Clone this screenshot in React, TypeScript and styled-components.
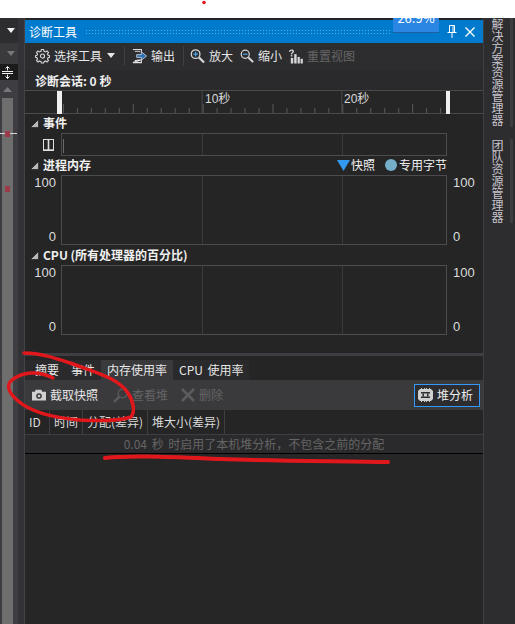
import React from "react";
import styled, { createGlobalStyle } from "styled-components";

const GlobalStyle = createGlobalStyle`
  html, body {
    margin: 0;
    padding: 0;
    background: #fff;
  }
  * {
    box-sizing: border-box;
  }
`;

const Page = styled.div`
  position: relative;
  width: 515px;
  height: 624px;
  overflow: hidden;
  display: flex;
  flex-direction: column;
  font-family: "Noto Sans CJK SC", "Liberation Sans", sans-serif;
  font-size: 12px;
  line-height: 16px;
  color: #e6e6e6;
`;

const TopGap = styled.div`
  height: 18px;
  flex: none;
  background: #fff;
  border-bottom: 1px solid #fff;
`;

const Workspace = styled.div`
  flex: 1;
  display: flex;
  min-height: 0;
  background: #2d2d30;
`;

/* left editor scrollbar */
const Rail = styled.div`
  position: relative;
  width: 25px;
  flex: none;
  display: flex;
  background: #333337;
  border-right: 1px solid #434346;
`;

const RailColumn = styled.div`
  width: 18px;
  display: flex;
  flex-direction: column;
  background: #3e3e42;
`;

const RailHead = styled.div<{ $h: number; $bg: string; $left?: number; $right?: number }>`
  height: ${(p) => p.$h}px;
  flex: none;
  display: flex;
  align-items: center;
  justify-content: center;
  background: ${(p) => p.$bg};
  padding-left: ${(p) => p.$left ?? 0}px;
  padding-right: ${(p) => p.$right ?? 0}px;
`;

const Thumb = styled.div`
  flex: 1;
  margin-left: 2px;
  margin-right: 5px;
  background: #6e6e6e;
`;

const RailLine = styled.div`
  position: absolute;
  left: 0;
  top: 115px;
  width: 17px;
  height: 1px;
  background: #d8d8d8;
`;

const RailMark = styled.div<{ $top: number }>`
  position: absolute;
  left: 5px;
  top: ${(p) => p.$top}px;
  width: 5px;
  height: 6px;
  background: #9b3a48;
`;

const Panel = styled.div`
  position: relative;
  width: 459px;
  flex: none;
  display: flex;
  flex-direction: column;
  background: #252526;
  overflow: hidden;
  padding-top: 2px;
  border-right: 1px solid #3f3f42;
`;

const TitleBar = styled.div`
  height: 23px;
  flex: none;
  display: flex;
  align-items: center;
  padding: 0 4px 0 4px;
  background: #007acc;
  color: #fff;
`;

const Grip = styled.div`
  flex: 1;
  height: 5px;
  margin: 0 52px 0 8px;
  background-image: radial-gradient(#5aaee0 0.7px, transparent 0.8px);
  background-size: 3px 3px;
`;

const TitleIcon = styled.div`
  width: 18px;
  height: 18px;
  display: flex;
  align-items: center;
  justify-content: center;
`;

const Badge = styled.div`
  position: absolute;
  left: 368px;
  top: -8px;
  width: 46px;
  height: 22px;
  background: #2b86e3;
  color: #fff;
  font-size: 13px;
  line-height: 16px;
  text-align: center;
  box-shadow: 0 1px 0 #1e5f9e;
`;

const Toolbar = styled.div`
  height: 27px;
  flex: none;
  display: flex;
  align-items: center;
  padding: 0 0 2px 10px;
  background: #2d2d30;
`;

const ToolItem = styled.div<{ $dim?: boolean; $gap?: number }>`
  display: flex;
  align-items: center;
  gap: 4px;
  margin-right: ${(p) => p.$gap ?? 0}px;
  color: ${(p) => (p.$dim ? "#656565" : "#e6e6e6")};
  white-space: nowrap;
`;

const ToolSep = styled.div<{ $before?: number; $after: number }>`
  width: 1px;
  height: 20px;
  background: #3f3f42;
  margin-left: ${(p) => p.$before ?? 0}px;
  margin-right: ${(p) => p.$after}px;
`;

const SessionRow = styled.div`
  height: 20px;
  flex: none;
  padding-left: 10px;
  background: #2a2a2c;
  font-weight: 700;
  line-height: 21px;
  color: #f0f0f0;
`;

const Ruler = styled.div`
  position: relative;
  height: 24px;
  flex: none;
  background: #262627;
  border-top: 1px solid #4a4a4c;
  border-bottom: 1px solid #4a4a4c;
`;

const RulerLabel = styled.span<{ $left: number }>`
  position: absolute;
  left: ${(p) => p.$left}px;
  top: 0;
  font-family: "Liberation Sans", "Noto Sans CJK SC", sans-serif;
  font-size: 12px;
  line-height: 16px;
  color: #d8d8d8;
`;

const RulerThumb = styled.div<{ $left: number; $w: number }>`
  position: absolute;
  left: ${(p) => p.$left}px;
  top: 0;
  width: ${(p) => p.$w}px;
  height: 23px;
  background: #f0f0f0;
`;

const RulerTicks = styled.svg`
  display: block;
  width: 100%;
  height: 22px;
`;

const SectionHead = styled.div<{ $top: number }>`
  height: 16px;
  flex: none;
  margin-top: ${(p) => p.$top}px;
  display: flex;
  align-items: center;
  gap: 4px;
  padding-left: 5px;
  font-weight: 700;
  color: #f0f0f0;
`;

const LegendRow = styled(SectionHead)`
  justify-content: space-between;
  padding-right: 36px;
`;

const HeadLeft = styled.div`
  display: flex;
  align-items: center;
  gap: 4px;
`;

const Legend = styled.div`
  display: flex;
  align-items: center;
  font-weight: 400;
`;

const LegendItem = styled.div<{ $gap?: number }>`
  display: flex;
  align-items: center;
  gap: 1px;
  margin-left: ${(p) => p.$gap ?? 0}px;
`;

const Dot = styled.span`
  display: block;
  width: 12px;
  height: 12px;
  border-radius: 50%;
  background: #75aec8;
  margin-right: 1px;
`;

const ChartRow = styled.div<{ $top: number; $h: number }>`
  height: ${(p) => p.$h}px;
  flex: none;
  margin-top: ${(p) => p.$top}px;
  display: grid;
  grid-template-columns: 36px 386px 1fr;
`;

const Axis = styled.div<{ $right?: boolean }>`
  display: flex;
  flex-direction: column;
  justify-content: space-between;
  align-items: ${(p) => (p.$right ? "flex-start" : "flex-end")};
  padding: 0 ${(p) => (p.$right ? 0 : 5)}px 0 ${(p) => (p.$right ? 6 : 0)}px;
  font-family: "Liberation Sans", sans-serif;
  font-size: 13px;
  color: #dcdcdc;
`;

const Plot = styled.div`
  display: grid;
  grid-template-columns: 141px 140px 1fr;
  border: 1px solid #4c4c4e;
`;

const PlotCell = styled.div`
  position: relative;
  border-right: 1px solid #3a3a3c;
  &:last-child {
    border-right: 0;
  }
`;

const TrackMark = styled.div`
  position: absolute;
  left: 1px;
  top: 5px;
  width: 1px;
  height: 14px;
  background: #6a6a6a;
`;

const PauseCell = styled.div`
  display: flex;
  align-items: center;
  justify-content: flex-end;
  padding-right: 7px;
`;

const Splitter = styled.div`
  height: 3px;
  flex: none;
  margin-top: 18px;
  background: #3e3e42;
`;

const Tabs = styled.div`
  height: 20px;
  flex: none;
  margin-top: 4px;
  display: flex;
  width: 224px;
  background: #2a2a2c;
`;

const Tab = styled.div<{ $active?: boolean; $w: number; $pad: number }>`
  width: ${(p) => p.$w}px;
  flex: none;
  padding-left: ${(p) => p.$pad}px;
  line-height: 20px;
  word-spacing: 2px;
  white-space: nowrap;
  background: ${(p) => (p.$active ? "#3a3a3d" : "transparent")};
  color: #e6e6e6;
`;

const CaptureBar = styled.div`
  height: 30px;
  flex: none;
  display: flex;
  align-items: center;
  padding: 0 3px 0 7px;
  background: #3a3a3d;
`;

const HeapButton = styled.div`
  margin-left: auto;
  width: 66px;
  height: 23px;
  display: flex;
  align-items: center;
  gap: 4px;
  padding-left: 3px;
  background: #2d2d30;
  border: 1px solid #3399ff;
  color: #f0f0f0;
`;

const HeaderRow = styled.div`
  height: 25px;
  flex: none;
  display: flex;
  background: #252526;
  border-bottom: 1px solid #3e3e42;
`;

const HeaderCell = styled.div<{ $w: number }>`
  width: ${(p) => p.$w}px;
  flex: none;
  padding-left: 4px;
  line-height: 24px;
  white-space: nowrap;
  border-right: 1px solid #3e3e42;
  color: #dcdcdc;
`;

const InfoRow = styled.div`
  height: 19px;
  flex: none;
  text-align: center;
  line-height: 17px;
  word-spacing: 2px;
  color: #656565;
  white-space: nowrap;
  background: #2a2a2c;
  border-bottom: 1px solid #000;
`;

const Rest = styled.div`
  flex: 1;
  background: #262626;
`;

const SideBar = styled.div`
  flex: 1;
  display: flex;
  flex-direction: column;
  gap: 12px;
  background: #2d2d30;
`;

const SideTab = styled.div<{ $h: number }>`
  height: ${(p) => p.$h}px;
  flex: none;
  display: flex;
  justify-content: space-between;
  padding: 0 2px 0 6px;
`;

const SideLabel = styled.div`
  writing-mode: vertical-rl;
  font-size: 12px;
  line-height: 14px;
  letter-spacing: 0;
  color: #c8c4cc;
  white-space: nowrap;
`;

const SideStripe = styled.div`
  width: 3px;
  background: #3e3e42;
`;

const Scribble = styled.svg`
  position: absolute;
  left: 0;
  top: 0;
  width: 515px;
  height: 624px;
  pointer-events: none;
`;

/* small drawn icons */
const Collapse = () => (
  <svg width="9" height="9" viewBox="0 0 9 9">
    <path d="M8.5 0.5V8.5H0.5Z" fill="#b8b8b8" stroke="#111" strokeWidth="0.6" />
  </svg>
);

const Caret = ({ color = "#e6e6e6", up = false, w = 8 }: { color?: string; up?: boolean; w?: number }) => (
  <svg width={w} height="5" viewBox="0 0 8 5" preserveAspectRatio="none">
    <path d={up ? "M0 5L4 0L8 5Z" : "M0 0H8L4 5Z"} fill={color} />
  </svg>
);

const SplitIcon = () => (
  <svg width="11" height="13" viewBox="0 0 11 13" fill="none" stroke="#f0f0f0">
    <path d="M0 5.5H11M0 7.5H11M5.5 0.5V4.5M5.5 8.5V12.5M3.5 2.5L5.5 0.5L7.5 2.5M3.5 10.5L5.5 12.5L7.5 10.5" />
  </svg>
);

const Gear = () => (
  <svg width="15" height="16" viewBox="0 0 16 16" fill="none" stroke="#d6d6d6" strokeWidth="1.2">
    <circle cx="8" cy="8" r="2.2" />
    <path d="M6.8 1H9.2L9.6 3L11.2 3.7L12.9 2.6L14.4 4.2L13.3 5.8L14 7.2L15.5 7.6V9.4L14 9.8L13.3 11.2L14.4 12.8L12.8 14.4L11.2 13.3L9.6 14L9.2 15.5H6.8L6.4 14L4.8 13.3L3.2 14.4L1.6 12.8L2.7 11.2L2 9.8L0.5 9.4V7.6L2 7.2L2.7 5.8L1.6 4.2L3.1 2.6L4.8 3.7L6.4 3Z" />
  </svg>
);

const ExportIcon = () => (
  <svg width="15" height="16" viewBox="0 0 16 16" fill="none">
    <path d="M1 1H10V4M10 12V15H1Z" stroke="#e0e0e0" strokeWidth="1.2" />
    <path d="M3 3H8V4M8 12V13H3Z" stroke="#e0e0e0" strokeWidth="1" />
    <path d="M5 6.5H10V3.5L15.5 8L10 12.5V9.5H5Z" fill="#2b6fb3" stroke="#e0e0e0" strokeWidth="0.8" />
  </svg>
);

const Magnifier = ({ mark, size }: { mark: "plus" | "minus"; size: number }) => (
  <svg width={size} height="16" viewBox="0 0 16 16" fill="none">
    <circle cx="6" cy="6" r="4.6" stroke="#d6d6d6" strokeWidth="1.4" />
    <path d="M9.6 9.6L15 15" stroke="#d6d6d6" strokeWidth="2.4" />
    <path d={mark === "plus" ? "M3.5 6H8.5M6 3.5V8.5" : "M3.5 6H8.5"} stroke="#4aa0e6" strokeWidth="1.4" />
  </svg>
);

const ResetIcon = () => (
  <svg width="15" height="16" viewBox="0 0 16 16" fill="#d6d6d6">
    <path d="M1 3.5C1 1 6 0 6.5 3C6.7 4.6 4.6 4.8 4.4 6.5H3C3 4.6 4.9 4 4.9 3C4.9 2 2.6 2 2.5 3.5Z" />
    <rect x="3" y="7" width="1.6" height="1.5" />
    <rect x="3" y="10" width="2.6" height="6" />
    <rect x="6.6" y="6" width="2.6" height="10" />
    <rect x="10.2" y="9" width="2.4" height="7" />
    <rect x="13.4" y="11" width="2.4" height="5" />
  </svg>
);

const Pin = () => (
  <svg width="10" height="13" viewBox="0 0 10 13" fill="none" stroke="#fff">
    <path d="M2.5 0.5H7.5V7.5H2.5ZM6 0.5V7.5M0.5 7.5H9.5M5 8V13" />
  </svg>
);

const CloseIcon = () => (
  <svg width="10" height="10" viewBox="0 0 10 10">
    <path d="M0.5 0.5L9.5 9.5M9.5 0.5L0.5 9.5" stroke="#fff" strokeWidth="1.4" />
  </svg>
);

const Pause = () => (
  <svg width="11" height="12" viewBox="0 0 11 12" fill="none" stroke="#e0e0e0">
    <rect x="0.5" y="0.5" width="10" height="11" />
    <path d="M5.5 0.5V11.5" strokeWidth="1.6" />
    <path d="M1 11H10" strokeWidth="1.4" />
  </svg>
);

const SnapshotMark = () => (
  <svg width="13" height="11" viewBox="0 0 13 11">
    <path d="M0 0H13L6.5 11Z" fill="#3399ee" />
  </svg>
);

const Camera = () => (
  <svg width="14" height="12" viewBox="0 0 15 12">
    <path d="M0 2.5H3L4 0.5H10L11 2.5H15V12H0Z" fill="#d0d0d0" />
    <circle cx="7.5" cy="7" r="3" fill="#3a3a3d" />
    <circle cx="7.5" cy="7" r="1.4" fill="#d0d0d0" />
  </svg>
);

const SearchDim = () => (
  <svg width="15" height="15" viewBox="0 0 15 15" fill="none" stroke="#5c5c5e">
    <circle cx="9.5" cy="5.5" r="4.4" strokeWidth="1.4" />
    <path d="M6.2 8.8L1 14" strokeWidth="2.4" />
  </svg>
);

const CrossDim = () => (
  <svg width="14" height="14" viewBox="0 0 14 14">
    <path d="M1 1L13 13M13 1L1 13" stroke="#5c5c5e" strokeWidth="2.6" />
  </svg>
);

const Chip = () => (
  <svg width="15" height="14" viewBox="0 0 15 14">
    <path d="M2 1H3V0H4V1H6V0H7V1H8V0H9V1H11V0H12V1H13L15 3V11L13 13H12V14H11V13H9V14H8V13H7V14H6V13H4V14H3V13H2L0 11V3Z" fill="#cfcfcf" />
    <rect x="3" y="4" width="9" height="1.5" fill="#2d2d30" />
    <rect x="3" y="8.5" width="9" height="1.5" fill="#2d2d30" />
    <rect x="4.5" y="5.5" width="1.5" height="3" fill="#2d2d30" />
    <rect x="9" y="5.5" width="1.5" height="3" fill="#2d2d30" />
  </svg>
);

// tick positions of the timeline, every 14px with a taller one each 5th
const ticks = Array.from({ length: 28 }, (_, i) => i);

const App = () => {
  return (
    <>
      <GlobalStyle />
      <Page>
        <TopGap />
        <Workspace>
          <Rail>
            <RailColumn>
              <RailHead $h={25} $bg="#2d2d30" $left={4}>
                <Caret color="#f0f0f0" />
              </RailHead>
              <RailHead $h={21} $bg="#3a3a3d" $left={4}>
                <Caret color="#77777a" />
              </RailHead>
              <RailHead $h={16} $bg="#1b1b1c" $right={3}>
                <SplitIcon />
              </RailHead>
              <RailHead $h={18} $bg="#3e3e42" $right={3}>
                <Caret color="#77777a" up w={9} />
              </RailHead>
              <Thumb />
            </RailColumn>
            <RailLine />
            <RailMark $top={113} />
            <RailMark $top={168} />
          </Rail>

          <Panel>
            <TitleBar>
              诊断工具
              <Grip />
              <TitleIcon>
                <Pin />
              </TitleIcon>
              <TitleIcon>
                <CloseIcon />
              </TitleIcon>
            </TitleBar>
            <Badge>26.9%</Badge>

            <Toolbar>
              <ToolItem $gap={5}>
                <Gear />
                选择工具
              </ToolItem>
              <Caret />
              <ToolSep $before={9} $after={7} />
              <ToolItem $gap={8}>
                <ExportIcon />
                输出
              </ToolItem>
              <ToolSep $after={6} />
              <ToolItem $gap={7}>
                <Magnifier mark="plus" size={15} />
                放大
              </ToolItem>
              <ToolItem $gap={6}>
                <Magnifier mark="minus" size={14} />
                缩小
              </ToolItem>
              <ToolItem $dim>
                <ResetIcon />
                重置视图
              </ToolItem>
            </Toolbar>

            <SessionRow>诊断会话: 0 秒</SessionRow>

            <Ruler>
              <RulerTicks viewBox="0 0 459 22">
                {ticks.map((i) => {
                  const x = 38 + i * 14;
                  const tall = i % 5 === 0;
                  return <line key={i} x1={x + 0.5} x2={x + 0.5} y1={tall ? 13 : 17} y2={22} stroke={"#5a5a5c"} />;
                })}
                <line x1={177.5} x2={177.5} y1={0} y2={22} stroke="#4a4a4c" />
                <line x1={317.5} x2={317.5} y1={0} y2={22} stroke="#4a4a4c" />
              </RulerTicks>
              <RulerLabel $left={180}>10秒</RulerLabel>
              <RulerLabel $left={319}>20秒</RulerLabel>
              <RulerThumb $left={32} $w={5} />
              <RulerThumb $left={421} $w={4} />
            </Ruler>

            <SectionHead $top={1}>
              <Collapse />
              事件
            </SectionHead>
            <ChartRow $top={2} $h={23}>
              <PauseCell>
                <Pause />
              </PauseCell>
              <Plot>
                <PlotCell>
                  <TrackMark />
                </PlotCell>
                <PlotCell />
                <PlotCell />
              </Plot>
            </ChartRow>

            <LegendRow $top={1}>
              <HeadLeft>
                <Collapse />
                进程内存
              </HeadLeft>
              <Legend>
                <LegendItem>
                  <SnapshotMark />
                  快照
                </LegendItem>
                <LegendItem $gap={10}>
                  <Dot />
                  专用字节
                </LegendItem>
              </Legend>
            </LegendRow>
            <ChartRow $top={2} $h={70}>
              <Axis>
                <span>100</span>
                <span>0</span>
              </Axis>
              <Plot>
                <PlotCell />
                <PlotCell />
                <PlotCell />
              </Plot>
              <Axis $right>
                <span>100</span>
                <span>0</span>
              </Axis>
            </ChartRow>

            <SectionHead $top={2}>
              <Collapse />
              CPU (所有处理器的百分比)
            </SectionHead>
            <ChartRow $top={2} $h={70}>
              <Axis>
                <span>100</span>
                <span>0</span>
              </Axis>
              <Plot>
                <PlotCell />
                <PlotCell />
                <PlotCell />
              </Plot>
              <Axis $right>
                <span>100</span>
                <span>0</span>
              </Axis>
            </ChartRow>

            <Splitter />
            <Tabs>
              <Tab $w={44} $pad={10}>摘要</Tab>
              <Tab $w={32} $pad={2}>事件</Tab>
              <Tab $w={72} $pad={6} $active>
                内存使用率
              </Tab>
              <Tab $w={76} $pad={6}>CPU 使用率</Tab>
            </Tabs>

            <CaptureBar>
              <ToolItem $gap={15}>
                <Camera />
                截取快照
              </ToolItem>
              <ToolItem $dim $gap={13}>
                <SearchDim />
                查看堆
              </ToolItem>
              <ToolItem $dim>
                <CrossDim />
                删除
              </ToolItem>
              <HeapButton>
                <Chip />
                堆分析
              </HeapButton>
            </CaptureBar>

            <HeaderRow>
              <HeaderCell $w={25}>ID</HeaderCell>
              <HeaderCell $w={33}>时间</HeaderCell>
              <HeaderCell $w={65}>分配(差异)</HeaderCell>
              <HeaderCell $w={77}>堆大小(差异)</HeaderCell>
            </HeaderRow>
            <InfoRow>0.04 秒 时启用了本机堆分析，不包含之前的分配</InfoRow>
            <Rest />
          </Panel>

          <SideBar>
            <SideTab $h={109}>
              <SideLabel>解决方案资源管理器</SideLabel>
              <SideStripe />
            </SideTab>
            <SideTab $h={84}>
              <SideLabel>团队资源管理器</SideLabel>
              <SideStripe />
            </SideTab>
          </SideBar>
        </Workspace>

        <Scribble viewBox="0 0 515 624" fill="none" stroke="#e0181c" strokeLinecap="round" strokeLinejoin="round">
          <path
            d="M24 353C40 353 55 358 70 363C95 372 118 378 128 393C134 402 135 412 131 417C120 421 100 421 80 420C55 418 30 412 17 400C8 392 6 385 12 380C22 372 38 370 53 378"
            strokeWidth="3.5"
          />
          <path d="M105 458C130 455 170 457 220 459C280 461 340 461 388 462" strokeWidth="4" />
          <circle cx="204" cy="2.5" r="1.8" fill="#e0181c" stroke="none" />
        </Scribble>
      </Page>
    </>
  );
};

export default App;
